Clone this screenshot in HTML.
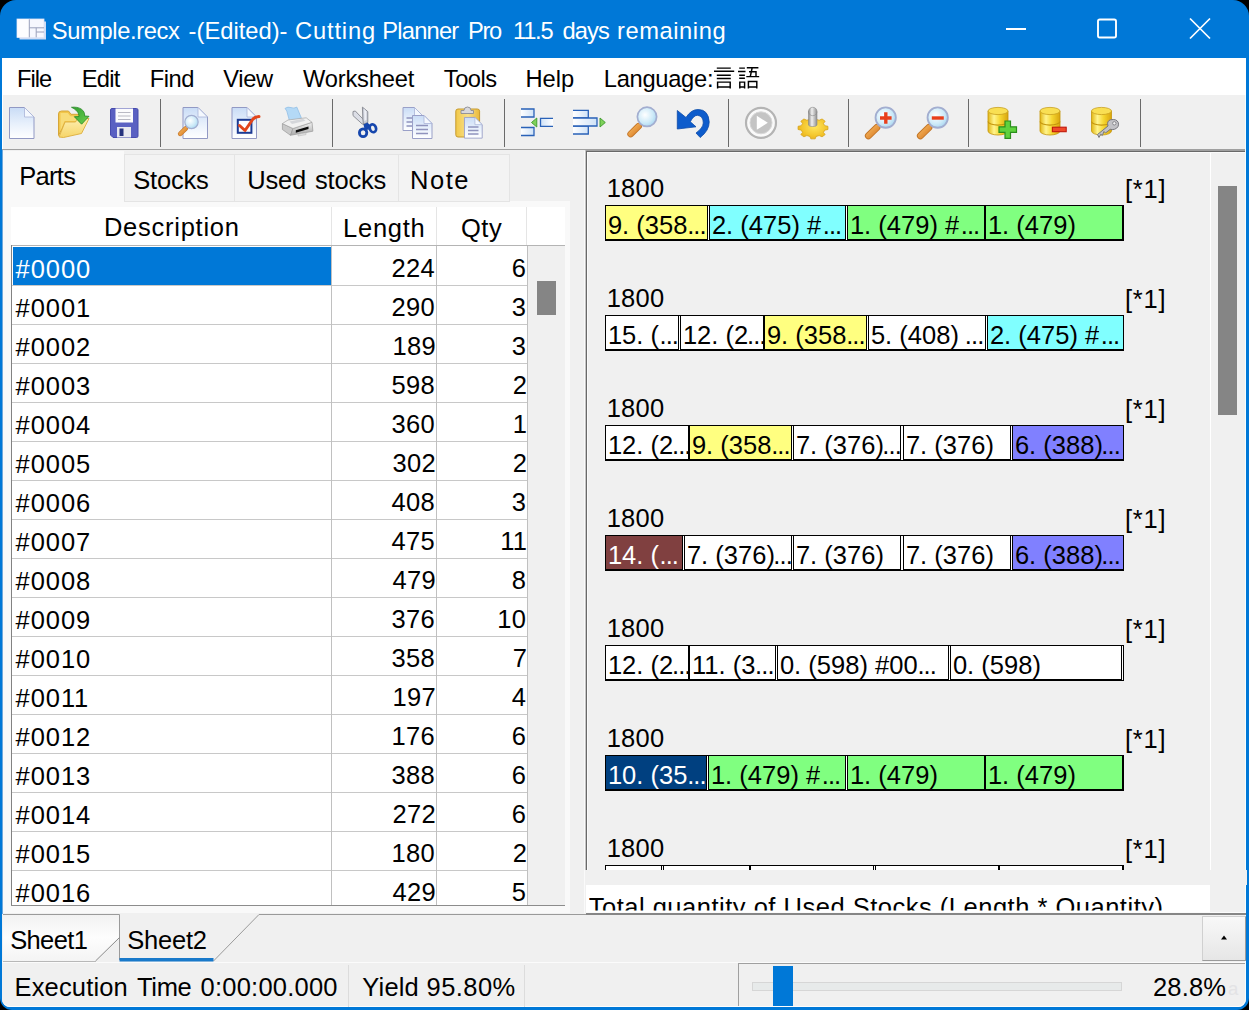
<!DOCTYPE html>
<html><head><meta charset="utf-8"><title>Cutting Planner Pro</title>
<style>
html,body{margin:0;padding:0;background:#000;}
body{width:1249px;height:1010px;overflow:hidden;position:relative;font-family:"Liberation Sans",sans-serif;}
#win{position:absolute;left:0;top:0;width:1249px;height:1010px;background:#0078d7;border-radius:16px 16px 12px 12px;overflow:hidden;}
.r{position:absolute;box-sizing:border-box;}
.t{position:absolute;white-space:pre;line-height:normal;font-family:"Liberation Sans",sans-serif;}
svg{position:absolute;overflow:visible;}

</style></head>
<body>
<div id="win">
<div class="r" style="left:2px;top:58px;width:1244px;height:949px;background:#f0f0f0;border-radius:0 0 8px 8px"></div>
<div class="r" style="left:2px;top:58px;width:1244px;height:37px;background:#fff"></div>
<div class="r" style="left:2px;top:95px;width:1244px;height:54px;background:#f0f0f0"></div>
<div class="r" style="left:2px;top:95px;width:1px;height:54px;background:#fff"></div>
<div class="r" style="left:2px;top:150px;width:1px;height:849px;background:#6fa9dc"></div>
<div class="r" style="left:3px;top:150px;width:1px;height:849px;background:#eaf3fb"></div>
<div class="r" style="left:2px;top:149px;width:1244px;height:1px;background:#a0a0a0"></div>
<div class="r" style="left:160px;top:99px;width:1px;height:48px;background:#6a6a6a"></div>
<div class="r" style="left:332px;top:99px;width:1px;height:48px;background:#6a6a6a"></div>
<div class="r" style="left:504px;top:99px;width:1px;height:48px;background:#6a6a6a"></div>
<div class="r" style="left:728px;top:99px;width:1px;height:48px;background:#6a6a6a"></div>
<div class="r" style="left:848px;top:99px;width:1px;height:48px;background:#6a6a6a"></div>
<div class="r" style="left:968px;top:99px;width:1px;height:48px;background:#6a6a6a"></div>
<div class="r" style="left:1140px;top:99px;width:1px;height:48px;background:#6a6a6a"></div>
<div class="r" style="left:3px;top:201px;width:567px;height:712px;background:#f9f9f9"></div>
<div class="r" style="left:3px;top:151px;width:121px;height:52px;background:#f9f9f9"></div>
<div class="r" style="left:124px;top:154px;width:111px;height:48px;background:#f3f3f3;border:1px solid #e4e4e4"></div>
<div class="r" style="left:234px;top:154px;width:165px;height:48px;background:#f3f3f3;border:1px solid #e4e4e4"></div>
<div class="r" style="left:398px;top:154px;width:112px;height:48px;background:#f3f3f3;border:1px solid #e4e4e4"></div>
<div class="r" style="left:11px;top:207px;width:554px;height:39px;background:#fff"></div>
<div class="r" style="left:331px;top:207px;width:1px;height:38px;background:#e5e5e5"></div>
<div class="r" style="left:436px;top:207px;width:1px;height:38px;background:#e5e5e5"></div>
<div class="r" style="left:526px;top:207px;width:1px;height:38px;background:#e5e5e5"></div>
<div class="r" style="left:11px;top:245px;width:554px;height:661px;background:#fff"></div>
<div class="r" style="left:11px;top:245px;width:554px;height:1px;background:#b4b4b4"></div>
<div class="r" style="left:11px;top:245px;width:1px;height:661px;background:#828282"></div>
<div class="r" style="left:528px;top:246px;width:37px;height:659px;background:#f0f0f0"></div>
<div class="r" style="left:537px;top:281px;width:19px;height:34px;background:#858585"></div>
<div class="r" style="left:12px;top:285px;width:516px;height:1px;background:#c8c8c8"></div>
<div class="r" style="left:12px;top:324px;width:516px;height:1px;background:#c8c8c8"></div>
<div class="r" style="left:12px;top:363px;width:516px;height:1px;background:#c8c8c8"></div>
<div class="r" style="left:12px;top:402px;width:516px;height:1px;background:#c8c8c8"></div>
<div class="r" style="left:12px;top:441px;width:516px;height:1px;background:#c8c8c8"></div>
<div class="r" style="left:12px;top:480px;width:516px;height:1px;background:#c8c8c8"></div>
<div class="r" style="left:12px;top:519px;width:516px;height:1px;background:#c8c8c8"></div>
<div class="r" style="left:12px;top:558px;width:516px;height:1px;background:#c8c8c8"></div>
<div class="r" style="left:12px;top:597px;width:516px;height:1px;background:#c8c8c8"></div>
<div class="r" style="left:12px;top:636px;width:516px;height:1px;background:#c8c8c8"></div>
<div class="r" style="left:12px;top:675px;width:516px;height:1px;background:#c8c8c8"></div>
<div class="r" style="left:12px;top:714px;width:516px;height:1px;background:#c8c8c8"></div>
<div class="r" style="left:12px;top:753px;width:516px;height:1px;background:#c8c8c8"></div>
<div class="r" style="left:12px;top:792px;width:516px;height:1px;background:#c8c8c8"></div>
<div class="r" style="left:12px;top:831px;width:516px;height:1px;background:#c8c8c8"></div>
<div class="r" style="left:12px;top:870px;width:516px;height:1px;background:#c8c8c8"></div>
<div class="r" style="left:331px;top:246px;width:1px;height:659px;background:#c0c0c0"></div>
<div class="r" style="left:436px;top:246px;width:1px;height:659px;background:#c0c0c0"></div>
<div class="r" style="left:527px;top:246px;width:1px;height:659px;background:#c0c0c0"></div>
<div class="r" style="left:13px;top:247px;width:318px;height:38px;background:#0078d7"></div>
<div class="r" style="left:11px;top:905px;width:554px;height:1px;background:#8c8c8c"></div>
<div class="r" style="left:584px;top:151px;width:1px;height:762px;background:#fafafa"></div>
<div class="r" style="left:585px;top:150px;width:661px;height:1px;background:#a0a0a0"></div>
<div class="r" style="left:585px;top:150px;width:1px;height:720px;background:#c4c4c4"></div>
<div class="r" style="left:586px;top:151px;width:660px;height:1px;background:#696969"></div>
<div class="r" style="left:586px;top:151px;width:1px;height:719px;background:#696969"></div>
<div class="r" style="left:587px;top:152px;width:658px;height:1px;background:#fafafa"></div>
<div class="r" style="left:587px;top:152px;width:1px;height:718px;background:#fafafa"></div>
<div class="r" style="left:1210px;top:153px;width:1px;height:717px;background:#fff"></div>
<div class="r" style="left:1218px;top:186px;width:19px;height:229px;background:#858585"></div>
<div class="r" style="left:1245px;top:95px;width:1px;height:900px;background:#f4feff"></div>
<div class="r" style="left:605px;top:205px;width:519px;height:36px;background:#fff;border:1px solid #000"></div>
<div class="r" style="left:605px;top:205px;width:103px;height:35px;background:#ffff80;border:1px solid #000"></div>
<div class="r" style="left:709px;top:205px;width:137px;height:35px;background:#80ffff;border:1px solid #000"></div>
<div class="r" style="left:847px;top:205px;width:138px;height:35px;background:#80ff80;border:1px solid #000"></div>
<div class="r" style="left:985px;top:205px;width:138px;height:35px;background:#80ff80;border:1px solid #000"></div>
<div class="r" style="left:605px;top:315px;width:519px;height:36px;background:#fff;border:1px solid #000"></div>
<div class="r" style="left:605px;top:315px;width:74px;height:35px;background:#fff;border:1px solid #000"></div>
<div class="r" style="left:680px;top:315px;width:84px;height:35px;background:#fff;border:1px solid #000"></div>
<div class="r" style="left:764px;top:315px;width:103px;height:35px;background:#ffff80;border:1px solid #000"></div>
<div class="r" style="left:868px;top:315px;width:118px;height:35px;background:#fff;border:1px solid #000"></div>
<div class="r" style="left:987px;top:315px;width:137px;height:35px;background:#80ffff;border:1px solid #000"></div>
<div class="r" style="left:605px;top:425px;width:519px;height:36px;background:#fff;border:1px solid #000"></div>
<div class="r" style="left:605px;top:425px;width:84px;height:35px;background:#fff;border:1px solid #000"></div>
<div class="r" style="left:689px;top:425px;width:103px;height:35px;background:#ffff80;border:1px solid #000"></div>
<div class="r" style="left:793px;top:425px;width:108px;height:35px;background:#fff;border:1px solid #000"></div>
<div class="r" style="left:903px;top:425px;width:108px;height:35px;background:#fff;border:1px solid #000"></div>
<div class="r" style="left:1012px;top:425px;width:112px;height:35px;background:#8080ff;border:1px solid #000"></div>
<div class="r" style="left:605px;top:535px;width:519px;height:36px;background:#fff;border:1px solid #000"></div>
<div class="r" style="left:605px;top:535px;width:78px;height:35px;background:#804040;border:1px solid #000"></div>
<div class="r" style="left:684px;top:535px;width:108px;height:35px;background:#fff;border:1px solid #000"></div>
<div class="r" style="left:793px;top:535px;width:108px;height:35px;background:#fff;border:1px solid #000"></div>
<div class="r" style="left:903px;top:535px;width:108px;height:35px;background:#fff;border:1px solid #000"></div>
<div class="r" style="left:1012px;top:535px;width:112px;height:35px;background:#8080ff;border:1px solid #000"></div>
<div class="r" style="left:605px;top:645px;width:519px;height:36px;background:#fff;border:1px solid #000"></div>
<div class="r" style="left:605px;top:645px;width:84px;height:35px;background:#fff;border:1px solid #000"></div>
<div class="r" style="left:689px;top:645px;width:87px;height:35px;background:#fff;border:1px solid #000"></div>
<div class="r" style="left:777px;top:645px;width:172px;height:35px;background:#fff;border:1px solid #000"></div>
<div class="r" style="left:950px;top:645px;width:172px;height:35px;background:#fff;border:1px solid #000"></div>
<div class="r" style="left:605px;top:755px;width:519px;height:36px;background:#fff;border:1px solid #000"></div>
<div class="r" style="left:605px;top:755px;width:102px;height:35px;background:#004080;border:1px solid #000"></div>
<div class="r" style="left:708px;top:755px;width:138px;height:35px;background:#80ff80;border:1px solid #000"></div>
<div class="r" style="left:847px;top:755px;width:138px;height:35px;background:#80ff80;border:1px solid #000"></div>
<div class="r" style="left:985px;top:755px;width:138px;height:35px;background:#80ff80;border:1px solid #000"></div>
<div class="r" style="left:605px;top:865px;width:519px;height:5px;background:#fff;border:1px solid #000;border-bottom:none"></div>
<div class="r" style="left:605px;top:865px;width:57px;height:5px;background:#fff;border:1px solid #000;border-bottom:none"></div>
<div class="r" style="left:663px;top:865px;width:87px;height:5px;background:#fff;border:1px solid #000;border-bottom:none"></div>
<div class="r" style="left:750px;top:865px;width:124px;height:5px;background:#fff;border:1px solid #000;border-bottom:none"></div>
<div class="r" style="left:875px;top:865px;width:124px;height:5px;background:#fff;border:1px solid #000;border-bottom:none"></div>
<div class="r" style="left:999px;top:865px;width:124px;height:5px;background:#fff;border:1px solid #000;border-bottom:none"></div>
<div class="r" style="left:586px;top:870px;width:661px;height:15px;background:#f0f0f0"></div>
<div class="r" style="left:586px;top:885px;width:624px;height:27px;background:#fff"></div>
<div class="r" style="left:586px;top:912px;width:660px;height:1px;background:#fbfbfb"></div>
<div class="r" style="left:2px;top:914px;width:1243px;height:48px;background:#f0f0f0"></div>
<div class="r" style="left:586px;top:913px;width:660px;height:2px;background:#868686"></div>
<svg style="left:0;top:0" width="1249" height="1010" viewBox="0 0 1249 1010">
<defs><linearGradient id="g1" x1="0" y1="0" x2="0" y2="1"><stop offset="0" stop-color="#f2f2f2"/><stop offset="0.5" stop-color="#fdfdfd"/><stop offset="1" stop-color="#f4f4f4"/></linearGradient></defs>
<polygon points="3,915 119,915 119,938 96,961 3,961" fill="url(#g1)"/>
<polyline points="3,914.5 119.5,914.5 119.5,960" fill="none" stroke="#9a9a9a" stroke-width="1"/>
<line x1="95.5" y1="961" x2="119.5" y2="937.5" stroke="#8a8a8a" stroke-width="1"/>
<line x1="3" y1="961.5" x2="96" y2="961.5" stroke="#b8b8b8" stroke-width="1"/>
<polyline points="213.5,961 259,914.5 586,914.5" fill="none" stroke="#9a9a9a" stroke-width="1"/>
<rect x="119.5" y="958" width="94" height="3.5" fill="#1979ca"/>
</svg>
<div class="r" style="left:1202px;top:916px;width:44px;height:45px;background:#f4f4f4;border:1px solid #d0d0d0;border-right-color:#9a9a9a;border-bottom-color:#9a9a9a;background:linear-gradient(#f8f8f8,#e6e6e6)"></div>
<svg style="left:1219px;top:934px" width="10" height="8" viewBox="0 0 10 8"><polygon points="5,1.5 8,5.5 2,5.5" fill="#000"/></svg>
<div class="r" style="left:2px;top:962px;width:1244px;height:45px;background:#f0f0f0;border-radius:0 0 8px 8px;border-bottom:1px solid #fdfdfd;border-right:1px solid #f4feff"></div>
<div class="r" style="left:2px;top:962px;width:1243px;height:1px;background:#fbfbfb"></div>
<div class="r" style="left:348px;top:965px;width:1px;height:42px;background:#dcdcdc"></div>
<div class="r" style="left:524px;top:965px;width:1px;height:42px;background:#dcdcdc"></div>
<div class="r" style="left:738px;top:963px;width:1px;height:43px;background:#a0a0a0"></div>
<div class="r" style="left:739px;top:963px;width:506px;height:1px;background:#a0a0a0"></div>
<div class="r" style="left:752px;top:982px;width:370px;height:9px;background:#e7eaea;border:1px solid #d6d6d6"></div>
<div class="r" style="left:773px;top:966px;width:20px;height:40px;background:#0078d7"></div>
<svg style="left:0;top:0" width="1249" height="58" viewBox="0 0 1249 58">
<line x1="1006" y1="29" x2="1026" y2="29" stroke="#fff" stroke-width="2"/>
<rect x="1098" y="19.5" width="18" height="18" fill="none" stroke="#fff" stroke-width="1.9" rx="1.8"/>
<path d="M1190 18.5 L1210 38.5 M1210 18.5 L1190 38.5" stroke="#fff" stroke-width="1.7" fill="none"/>
</svg>
<svg style="left:0;top:95px" width="1249" height="55" viewBox="0 95 1249 55">
<defs>
<linearGradient id="gdoc" x1="0" y1="0" x2="0" y2="1"><stop offset="0" stop-color="#c9dcf6"/><stop offset="0.55" stop-color="#e9f1fc"/><stop offset="1" stop-color="#ffffff"/></linearGradient>
<linearGradient id="gfold" x1="0" y1="0" x2="0" y2="1"><stop offset="0" stop-color="#f5cf58"/><stop offset="1" stop-color="#fbe9a2"/></linearGradient>
<linearGradient id="gfold2" x1="0" y1="0" x2="0" y2="1"><stop offset="0" stop-color="#fdeeb0"/><stop offset="1" stop-color="#f6d568"/></linearGradient>
<linearGradient id="ggreen" x1="0" y1="0" x2="1" y2="1"><stop offset="0" stop-color="#2f9e2f"/><stop offset="1" stop-color="#6fd14f"/></linearGradient>
<radialGradient id="glens" cx="0.4" cy="0.4" r="0.7"><stop offset="0" stop-color="#ffffff"/><stop offset="0.6" stop-color="#cdeaf8"/><stop offset="1" stop-color="#9fd0ee"/></radialGradient>
<linearGradient id="gorange" x1="0" y1="0" x2="1" y2="1"><stop offset="0" stop-color="#f6b45a"/><stop offset="1" stop-color="#d9802a"/></linearGradient>
<linearGradient id="gbar" x1="0" y1="0" x2="1" y2="0"><stop offset="0" stop-color="#ffffff"/><stop offset="1" stop-color="#cfe2f7"/></linearGradient>
<linearGradient id="gbarr" x1="1" y1="0" x2="0" y2="0"><stop offset="0" stop-color="#ffffff"/><stop offset="1" stop-color="#cfe2f7"/></linearGradient>
<linearGradient id="gcyl" x1="0" y1="0" x2="1" y2="0"><stop offset="0" stop-color="#e2b714"/><stop offset="0.3" stop-color="#fff48c"/><stop offset="0.6" stop-color="#f6d731"/><stop offset="1" stop-color="#d9a50c"/></linearGradient>
<linearGradient id="gprint" x1="0" y1="0" x2="0" y2="1"><stop offset="0" stop-color="#f2f2f2"/><stop offset="1" stop-color="#a8a8a8"/></linearGradient>
<linearGradient id="gstick" x1="0" y1="0" x2="1" y2="0"><stop offset="0" stop-color="#8a8a8a"/><stop offset="0.4" stop-color="#f0f0f0"/><stop offset="1" stop-color="#8e8e8e"/></linearGradient>
<radialGradient id="ggear" cx="0.55" cy="0.45" r="0.7"><stop offset="0" stop-color="#ffe55c"/><stop offset="0.6" stop-color="#f3c52c"/><stop offset="1" stop-color="#e2a514"/></radialGradient>
<linearGradient id="gclip" x1="0" y1="0" x2="1" y2="0"><stop offset="0" stop-color="#f1c848"/><stop offset="0.5" stop-color="#f9e08a"/><stop offset="1" stop-color="#e9b93a"/></linearGradient>
<filter id="soft" x="-5%" y="-5%" width="110%" height="110%"><feGaussianBlur stdDeviation="0.45"/></filter>
</defs>
<g filter="url(#soft)">
<!-- 1 new -->
<g transform="translate(9 107)"><path d="M0.5 0.5 H15.5 L25 10 V31.5 H0.5 Z" fill="url(#gdoc)" stroke="#9299c4" stroke-width="1"/><path d="M15.5 0.5 V10 H25 Z" fill="#f4f8fe" stroke="#a9b4d8" stroke-width="0.8"/></g>
<!-- 2 open -->
<path d="M58.5 135.5 V114 Q58.5 111 61.5 111 H68.5 L71 114.3 H83 V123 H65 Z" fill="#f2c64c" stroke="#d6a637" stroke-width="1"/>
<path d="M60.5 113 H67.8 L70.3 116.2 H80 V121 H64.5 L60.5 131 Z" fill="#f8dc78"/>
<path d="M59 137 L65 122 H75.5 L77.5 118.5 H89 L81.5 133.5 L63.5 137.5 Z" fill="url(#gfold2)" stroke="#dcae3c" stroke-width="0.9" stroke-linejoin="round"/>
<path d="M71.5 107.3 C79 106.3 85.3 110 84.6 116 L89 116.3 L81.6 124.2 L74.3 116.7 L79 116.5 C79 112.5 76 109.5 71.5 107.3 Z" fill="url(#ggreen)" stroke="#23861f" stroke-width="0.8" stroke-linejoin="round"/>
<!-- 3 save -->
<path d="M110.5 110 q0 -1.5 1.5 -1.5 H136.5 q1.5 0 1.5 1.5 V136 q0 1.5 -1.5 1.5 H113 L110.5 135 Z" fill="#5a60c2" stroke="#474cad" stroke-width="1"/>
<rect x="115.5" y="108.5" width="17.5" height="14" fill="#fbfbfd"/>
<path d="M118 112.5 H130.5 M118 116 H130.5 M118 119.5 H130.5" stroke="#b9b9c4" stroke-width="1.2"/>
<rect x="117" y="127" width="14" height="10.5" fill="#e9e9f0"/>
<rect x="119.5" y="128.5" width="4" height="7.5" fill="#27307e"/>
<!-- 4 preview -->
<g transform="translate(182.5 107)"><path d="M0.5 0.5 H15.5 L25 10 V31.5 H0.5 Z" fill="url(#gdoc)" stroke="#9299c4" stroke-width="1"/><path d="M15.5 0.5 V10 H25 Z" fill="#f4f8fe" stroke="#a9b4d8" stroke-width="0.8"/></g>
<g transform="translate(191.5 122) scale(0.74)"><g><line x1="-7.8" y1="8.8" x2="-15.3" y2="16.1" stroke="#c27426" stroke-width="6.2" stroke-linecap="round"/><line x1="-7.8" y1="8.8" x2="-15.3" y2="16.1" stroke="url(#gorange)" stroke-width="4.6" stroke-linecap="round"/><circle cx="0" cy="0" r="9" fill="url(#glens)" stroke="#a3aed0" stroke-width="1.6"/></g></g>
<!-- 5 check -->
<g transform="translate(231.5 107)"><path d="M0.5 0.5 H15.5 L25 10 V31.5 H0.5 Z" fill="url(#gdoc)" stroke="#9299c4" stroke-width="1"/><path d="M15.5 0.5 V10 H25 Z" fill="#f4f8fe" stroke="#a9b4d8" stroke-width="0.8"/></g>
<rect x="237.8" y="119.8" width="13.6" height="13" fill="#fdfdff" stroke="#1d3a93" stroke-width="2"/>
<path d="M239.5 125.5 L245 130.5 L253 119 Q256 116.5 259 116.5" fill="none" stroke="#e2441a" stroke-width="3" stroke-linejoin="round" stroke-linecap="round"/>
<!-- 6 printer -->
<path d="M285 108.4 Q288 106.3 291 107.6 T296.8 107.1 L301.3 117.8 L289.7 121.6 L286.8 111 Z" fill="#b4d9f6" stroke="#93bfe6" stroke-width="0.8" stroke-linejoin="round"/>
<path d="M282.4 123.6 L293 128.5 L290.5 135.3 L282.4 129.5 Z" fill="#c9c9c9" stroke="#9a9a9a" stroke-width="0.7" stroke-linejoin="round"/>
<path d="M293 128.5 L312 122.3 L312.9 131.2 L290.5 135.3 Z" fill="url(#gprint)" stroke="#9a9a9a" stroke-width="0.7" stroke-linejoin="round"/>
<path d="M282.4 123.6 L288 120 L306.2 117.8 L312 122.3 L293 128.5 Z" fill="#f1f1f1" stroke="#a4a4a4" stroke-width="0.7" stroke-linejoin="round"/>
<path d="M289.5 121.5 L303 118.8 L305.5 120.8 L292 124 Z" fill="#d4d6da"/>
<path d="M295.8 130.2 L308.5 126.4 V128.9 L295.8 132.7 Z" fill="#0c0c0c"/>
<path d="M298 134.3 L306 132.8 V134.6 L298 136 Z" fill="#e4e4e4" stroke="#b0b0b0" stroke-width="0.5"/>
<!-- 7 cut -->
<path d="M353 111.5 L355.3 111 L365.2 121.4 L364.8 125.2 L362 123.8 L353 115.6 Z" fill="#dcdee6" stroke="#84878f" stroke-width="0.9" stroke-linejoin="round"/>
<path d="M362.4 107.1 L367.8 111.6 V122.5 L363.4 124.2 L362.8 118.7 Z" fill="#c9ccd6" stroke="#84878f" stroke-width="0.9" stroke-linejoin="round"/>
<path d="M364.2 108.8 L366.4 111.5 V120 L364.4 121 Z" fill="#eef0f6"/>
<path d="M363.5 124.5 L367.5 122.5 L369.8 125 L368.5 130 L364.5 129 Z" fill="#1746ad"/>
<ellipse cx="363.1" cy="132.8" rx="3.7" ry="3.9" fill="none" stroke="#1746ad" stroke-width="2.8"/>
<ellipse cx="372.9" cy="128.3" rx="3.1" ry="4.0" fill="none" stroke="#1746ad" stroke-width="2.7" transform="rotate(-20 372.9 128.3)"/>
<!-- 8 copy -->
<g transform="translate(402.5 107)"><path d="M0.5 0.5 H12 L20 8.5 V23.5 H0.5 Z" fill="url(#gdoc)" stroke="#9aa0c8" stroke-width="1"/><path d="M12 0.5 V8.5 H20 Z" fill="#f4f8fe" stroke="#a9b4d8" stroke-width="0.8"/></g>
<path d="M406.5 118 H416 M406.5 122 H416 M406.5 126 H416" stroke="#8f93bd" stroke-width="1.7"/>
<g transform="translate(412 115)"><path d="M0.5 0.5 H12 L20 8.5 V23.5 H0.5 Z" fill="url(#gdoc)" stroke="#9aa0c8" stroke-width="1"/><path d="M12 0.5 V8.5 H20 Z" fill="#f4f8fe" stroke="#a9b4d8" stroke-width="0.8"/></g>
<path d="M416 125.5 H428 M416 129.5 H428 M416 133.5 H428" stroke="#8f93bd" stroke-width="1.7"/>
<!-- 9 paste -->
<rect x="455.8" y="109" width="23.8" height="28" rx="2.2" fill="url(#gclip)" stroke="#c79a2e" stroke-width="1"/>
<path d="M461 113.5 V110.5 h3 q0 -3.5 3.5 -3.5 q3.5 0 3.5 3.5 h2.5 V113.5 Z" fill="#d8d8dc" stroke="#8c8c94" stroke-width="0.9"/>
<g transform="translate(464 117) scale(0.91 0.9)"><g><path d="M0.5 0.5 H12 L20 8.5 V23.5 H0.5 Z" fill="url(#gdoc)" stroke="#9aa0c8" stroke-width="1"/><path d="M12 0.5 V8.5 H20 Z" fill="#f4f8fe" stroke="#a9b4d8" stroke-width="0.8"/></g></g>
<path d="M468 127 H478.5 M468 130.5 H478.5 M468 134 H478.5" stroke="#8f93bd" stroke-width="1.6"/>
<!-- 10 align a -->
<path d="M521 109 H534 V117 H521" fill="url(#gbar)" stroke="#2a62b8" stroke-width="1.3"/>
<path d="M521 127.5 H534 V135.5 H521" fill="url(#gbar)" stroke="#2a62b8" stroke-width="1.3"/>
<path d="M553 118.3 H540.5 V126.3 H553" fill="url(#gbarr)" stroke="#2a62b8" stroke-width="1.3"/>
<path d="M536.8 118 V127 L531.5 122.5 Z" fill="#7fd15a" stroke="#3c9a2c" stroke-width="0.9"/>
<!-- 11 align b -->
<path d="M573 110.3 H588.3 V118 H573" fill="url(#gbar)" stroke="#2a62b8" stroke-width="1.3"/>
<path d="M573 126 H588.3 V134 H573" fill="url(#gbar)" stroke="#2a62b8" stroke-width="1.3"/>
<path d="M573 118 H597 V126 H573" fill="url(#gbar)" stroke="#2a62b8" stroke-width="1.3"/>
<path d="M600 118 V127 L605.3 122.5 Z" fill="#7fd15a" stroke="#3c9a2c" stroke-width="0.9"/>
<!-- 12 find -->
<g transform="translate(647 116.8) scale(1.07)"><g><line x1="-7.8" y1="8.8" x2="-15.3" y2="16.1" stroke="#c27426" stroke-width="6.2" stroke-linecap="round"/><line x1="-7.8" y1="8.8" x2="-15.3" y2="16.1" stroke="url(#gorange)" stroke-width="4.6" stroke-linecap="round"/><circle cx="0" cy="0" r="9" fill="url(#glens)" stroke="#a3aed0" stroke-width="1.6"/></g></g>
<!-- 13 undo -->
<path d="M677.3 110.5 V129 L696 126.8 L690.3 121.8 Q693.5 115.3 697.5 115.3 Q703.3 116 703.3 123 Q703 128 696 133 L700.2 137.5 Q709.2 130.5 709.2 122 Q708.5 109.5 698 109.5 Q691 109.5 686 117.5 Z" fill="#0b5ccc" stroke="#094aa8" stroke-width="0.8" stroke-linejoin="round"/>
<!-- 14 play -->
<circle cx="761" cy="122.8" r="15" fill="#fafafa" stroke="#b4b4b4" stroke-width="2.2"/>
<circle cx="761" cy="122.8" r="11" fill="#c4c4c4" stroke="#d8d8d8" stroke-width="1"/>
<path d="M756.8 115.8 V129.8 L767.8 122.8 Z" fill="#ffffff"/>
<!-- 15 gear -->
<g transform="translate(813 126.85) scale(0.9 0.66)">
<path d="M-2.4 -15 h4.8 l1 3.6 l3.4 1.4 l3.3 -1.9 l3.4 3.4 l-1.9 3.3 l1.4 3.4 l3.6 1 v4.8 l-3.6 1 l-1.4 3.4 l1.9 3.3 l-3.4 3.4 l-3.3 -1.9 l-3.4 1.4 l-1 3.6 h-4.8 l-1 -3.6 l-3.4 -1.4 l-3.3 1.9 l-3.4 -3.4 l1.9 -3.3 l-1.4 -3.4 l-3.6 -1 v-4.8 l3.6 -1 l1.4 -3.4 l-1.9 -3.3 l3.4 -3.4 l3.3 1.9 l3.4 -1.4 Z" fill="url(#ggear)" stroke="#d6a21a" stroke-width="1"/>
</g>
<path d="M808.5 111.5 V124.5 A4.2 2 0 0 0 817 124.5 V111.5 Z" fill="url(#gstick)" stroke="#8a8a8a" stroke-width="0.6"/>
<ellipse cx="812.75" cy="111.5" rx="4.25" ry="4.2" fill="url(#gstick)" stroke="#8a8a8a" stroke-width="0.6"/>
<!-- 16 zoom in -->
<g transform="translate(885.7 117.6) scale(1.13)"><g><line x1="-7.8" y1="8.8" x2="-15.3" y2="16.1" stroke="#c27426" stroke-width="6.2" stroke-linecap="round"/><line x1="-7.8" y1="8.8" x2="-15.3" y2="16.1" stroke="url(#gorange)" stroke-width="4.6" stroke-linecap="round"/><circle cx="0" cy="0" r="9" fill="url(#glens)" stroke="#a3aed0" stroke-width="1.6"/></g></g>
<path d="M880 118 H891.6 M885.8 112.2 V123.8" stroke="#e8401f" stroke-width="3.4"/>
<!-- 17 zoom out -->
<g transform="translate(937.7 117.6) scale(1.13)"><g><line x1="-7.8" y1="8.8" x2="-15.3" y2="16.1" stroke="#c27426" stroke-width="6.2" stroke-linecap="round"/><line x1="-7.8" y1="8.8" x2="-15.3" y2="16.1" stroke="url(#gorange)" stroke-width="4.6" stroke-linecap="round"/><circle cx="0" cy="0" r="9" fill="url(#glens)" stroke="#a3aed0" stroke-width="1.6"/></g></g>
<path d="M931.8 118 H943.8" stroke="#e8401f" stroke-width="3.4"/>
<!-- 18 db add -->
<g transform="translate(988 107)"><path d="M0 4 V24 A10 4 0 0 0 20 24 V4 Z" fill="url(#gcyl)" stroke="#c4950e" stroke-width="0.8"/><path d="M0 14.5 A10 3.6 0 0 0 20 14.5" fill="none" stroke="#c4950e" stroke-width="1.1"/><ellipse cx="10" cy="4" rx="10" ry="3.6" fill="#f9df52" stroke="#c9a020" stroke-width="0.8"/></g>
<path d="M1005 121 h5.5 v5.8 h6 v5.5 h-6 v6 h-5.5 v-6 h-6 v-5.5 h6 Z" fill="#5fd23c" stroke="#2a8f1e" stroke-width="1.2"/>
<!-- 19 db remove -->
<g transform="translate(1040 107)"><path d="M0 4 V24 A10 4 0 0 0 20 24 V4 Z" fill="url(#gcyl)" stroke="#c4950e" stroke-width="0.8"/><path d="M0 14.5 A10 3.6 0 0 0 20 14.5" fill="none" stroke="#c4950e" stroke-width="1.1"/><ellipse cx="10" cy="4" rx="10" ry="3.6" fill="#f9df52" stroke="#c9a020" stroke-width="0.8"/></g>
<rect x="1052.4" y="127.2" width="13.8" height="4.5" fill="#f04a2c" stroke="#c0180e" stroke-width="1.1"/>
<!-- 20 db key -->
<g transform="translate(1091.5 107)"><path d="M0 4 V24 A10 4 0 0 0 20 24 V4 Z" fill="url(#gcyl)" stroke="#c4950e" stroke-width="0.8"/><path d="M0 14.5 A10 3.6 0 0 0 20 14.5" fill="none" stroke="#c4950e" stroke-width="1.1"/><ellipse cx="10" cy="4" rx="10" ry="3.6" fill="#f9df52" stroke="#c9a020" stroke-width="0.8"/></g>
<path d="M1099 137.5 L1097.5 134.5 L1108 126 Q1106.5 121 1110.5 119.8 Q1116.5 118.5 1118.3 122.5 Q1119.5 127.5 1114.5 129.3 Q1112 130 1110.2 129.3 L1105.5 133 L1104 131.5 L1102.3 135.5 L1100.8 134.2 Z" fill="#c2c2c6" stroke="#77777d" stroke-width="1"/>
<circle cx="1114.3" cy="123.3" r="1.7" fill="#f0f0f0" stroke="#77777d" stroke-width="0.8"/>
</g>
</svg>

<svg style="left:0;top:58px" width="1249" height="37" viewBox="0 58 1249 37">
<g fill="none" stroke="#000" stroke-width="1.45" transform="translate(0 -0.9)">
<path d="M716.8 69 H730.8 M714 72.2 H734.2 M716.8 76.2 H730.8 M716.8 79.4 H730.8 M717.6 89.3 V83 H730.2 V89.3 M717.6 87.8 H730.2"/>
<path d="M739.2 69 H744.9 M738 72.3 H745.5 M739.2 76.1 H744.9 M739.2 79.2 H744.9 M739.8 89.3 V83 H744.6 V89.3 M739.8 87.8 H744.6"/>
<path d="M746.8 68.6 H758.4 M752.2 68.6 L750.3 77.4 M749 72.7 H756 V77.4 M746.3 77.5 H759.2 M748.4 89.4 V82.3 H756.8 V89.4 M748.4 87.9 H756.8"/>
</g>
</svg>
<svg style="left:0;top:0" width="60" height="58" viewBox="0 0 60 58">
<path d="M19.5 21.5 H46 V39.5 H19.5 Z" fill="#cfdcf5"/>
<rect x="17" y="19" width="27" height="18.5" fill="#f6f7fe" stroke="#dfe4f4" stroke-width="0.8"/>
<rect x="17.4" y="19.4" width="11.6" height="17.7" fill="#fdfdff"/>
<path d="M29.3 19.3 V37.3 M29.3 27.8 H44 M36.2 27.8 V37.3 M36.2 32 H44" fill="none" stroke="#9aa0bb" stroke-width="1"/>
</svg>

<span class="t" style="left:15.60px;top:254.92px;font-size:25.5px;color:#fff;letter-spacing:0.918px">#0000</span>
<span class="t" style="left:391.50px;top:253.62px;font-size:25.5px;color:#000;letter-spacing:0.368px">224</span>
<span class="t" style="left:511.80px;top:253.62px;font-size:25.5px;color:#000;letter-spacing:0.368px">6</span>
<span class="t" style="left:15.60px;top:293.92px;font-size:25.5px;color:#000;letter-spacing:0.918px">#0001</span>
<span class="t" style="left:391.50px;top:292.62px;font-size:25.5px;color:#000;letter-spacing:0.368px">290</span>
<span class="t" style="left:511.80px;top:292.62px;font-size:25.5px;color:#000;letter-spacing:0.368px">3</span>
<span class="t" style="left:15.60px;top:332.92px;font-size:25.5px;color:#000;letter-spacing:0.918px">#0002</span>
<span class="t" style="left:392.50px;top:331.62px;font-size:25.5px;color:#000;letter-spacing:0.368px">189</span>
<span class="t" style="left:511.80px;top:331.62px;font-size:25.5px;color:#000;letter-spacing:0.368px">3</span>
<span class="t" style="left:15.60px;top:371.92px;font-size:25.5px;color:#000;letter-spacing:0.918px">#0003</span>
<span class="t" style="left:391.50px;top:370.62px;font-size:25.5px;color:#000;letter-spacing:0.368px">598</span>
<span class="t" style="left:512.80px;top:370.62px;font-size:25.5px;color:#000;letter-spacing:0.368px">2</span>
<span class="t" style="left:15.60px;top:410.92px;font-size:25.5px;color:#000;letter-spacing:0.918px">#0004</span>
<span class="t" style="left:391.50px;top:409.62px;font-size:25.5px;color:#000;letter-spacing:0.368px">360</span>
<span class="t" style="left:512.80px;top:409.62px;font-size:25.5px;color:#000;letter-spacing:0.368px">1</span>
<span class="t" style="left:15.60px;top:449.92px;font-size:25.5px;color:#000;letter-spacing:0.918px">#0005</span>
<span class="t" style="left:392.50px;top:448.62px;font-size:25.5px;color:#000;letter-spacing:0.368px">302</span>
<span class="t" style="left:512.80px;top:448.62px;font-size:25.5px;color:#000;letter-spacing:0.368px">2</span>
<span class="t" style="left:15.60px;top:488.92px;font-size:25.5px;color:#000;letter-spacing:0.918px">#0006</span>
<span class="t" style="left:391.50px;top:487.62px;font-size:25.5px;color:#000;letter-spacing:0.368px">408</span>
<span class="t" style="left:511.80px;top:487.62px;font-size:25.5px;color:#000;letter-spacing:0.368px">3</span>
<span class="t" style="left:15.60px;top:527.92px;font-size:25.5px;color:#000;letter-spacing:0.918px">#0007</span>
<span class="t" style="left:391.50px;top:526.62px;font-size:25.5px;color:#000;letter-spacing:0.368px">475</span>
<span class="t" style="left:500.14px;top:526.62px;font-size:25.5px;color:#000;letter-spacing:0.368px">11</span>
<span class="t" style="left:15.60px;top:566.92px;font-size:25.5px;color:#000;letter-spacing:0.918px">#0008</span>
<span class="t" style="left:392.50px;top:565.62px;font-size:25.5px;color:#000;letter-spacing:0.368px">479</span>
<span class="t" style="left:511.80px;top:565.62px;font-size:25.5px;color:#000;letter-spacing:0.368px">8</span>
<span class="t" style="left:15.60px;top:605.92px;font-size:25.5px;color:#000;letter-spacing:0.918px">#0009</span>
<span class="t" style="left:391.50px;top:604.62px;font-size:25.5px;color:#000;letter-spacing:0.368px">376</span>
<span class="t" style="left:497.25px;top:604.62px;font-size:25.5px;color:#000;letter-spacing:0.368px">10</span>
<span class="t" style="left:15.60px;top:644.92px;font-size:25.5px;color:#000;letter-spacing:0.918px">#0010</span>
<span class="t" style="left:391.50px;top:643.62px;font-size:25.5px;color:#000;letter-spacing:0.368px">358</span>
<span class="t" style="left:512.80px;top:643.62px;font-size:25.5px;color:#000;letter-spacing:0.368px">7</span>
<span class="t" style="left:15.60px;top:683.92px;font-size:25.5px;color:#000;letter-spacing:0.918px">#0011</span>
<span class="t" style="left:392.50px;top:682.62px;font-size:25.5px;color:#000;letter-spacing:0.368px">197</span>
<span class="t" style="left:511.80px;top:682.62px;font-size:25.5px;color:#000;letter-spacing:0.368px">4</span>
<span class="t" style="left:15.60px;top:722.92px;font-size:25.5px;color:#000;letter-spacing:0.918px">#0012</span>
<span class="t" style="left:391.50px;top:721.62px;font-size:25.5px;color:#000;letter-spacing:0.368px">176</span>
<span class="t" style="left:511.80px;top:721.62px;font-size:25.5px;color:#000;letter-spacing:0.368px">6</span>
<span class="t" style="left:15.60px;top:761.92px;font-size:25.5px;color:#000;letter-spacing:0.918px">#0013</span>
<span class="t" style="left:391.50px;top:760.62px;font-size:25.5px;color:#000;letter-spacing:0.368px">388</span>
<span class="t" style="left:511.80px;top:760.62px;font-size:25.5px;color:#000;letter-spacing:0.368px">6</span>
<span class="t" style="left:15.60px;top:800.92px;font-size:25.5px;color:#000;letter-spacing:0.918px">#0014</span>
<span class="t" style="left:392.50px;top:799.62px;font-size:25.5px;color:#000;letter-spacing:0.368px">272</span>
<span class="t" style="left:511.80px;top:799.62px;font-size:25.5px;color:#000;letter-spacing:0.368px">6</span>
<span class="t" style="left:15.60px;top:839.92px;font-size:25.5px;color:#000;letter-spacing:0.918px">#0015</span>
<span class="t" style="left:391.50px;top:838.62px;font-size:25.5px;color:#000;letter-spacing:0.368px">180</span>
<span class="t" style="left:512.80px;top:838.62px;font-size:25.5px;color:#000;letter-spacing:0.368px">2</span>
<span class="t" style="left:15.60px;top:878.92px;font-size:25.5px;color:#000;letter-spacing:0.918px">#0016</span>
<span class="t" style="left:392.50px;top:877.62px;font-size:25.5px;color:#000;letter-spacing:0.368px">429</span>
<span class="t" style="left:511.80px;top:877.62px;font-size:25.5px;color:#000;letter-spacing:0.368px">5</span>
<span class="t" style="left:103.90px;top:213.32px;font-size:25.5px;color:#000;letter-spacing:0.753px">Description</span>
<span class="t" style="left:343.00px;top:213.52px;font-size:25.5px;color:#000;letter-spacing:0.758px">Length</span>
<span class="t" style="left:460.90px;top:213.52px;font-size:25.5px;color:#000;letter-spacing:0.640px">Qty</span>
<span class="t" style="left:19.20px;top:162.42px;font-size:25.5px;color:#000;letter-spacing:-0.667px">Parts</span>
<span class="t" style="left:133.30px;top:166.42px;font-size:25.5px;color:#000;letter-spacing:-0.215px">Stocks</span>
<span class="t" style="left:247.30px;top:166.42px;font-size:25.5px;color:#000;letter-spacing:-0.249px">Used</span>
<span class="t" style="left:315.00px;top:166.42px;font-size:25.5px;color:#000;letter-spacing:-0.203px">stocks</span>
<span class="t" style="left:409.90px;top:166.42px;font-size:25.5px;color:#000;letter-spacing:1.573px">Note</span>
<span class="t" style="left:607.90px;top:210.82px;font-size:25.5px;color:#000;letter-spacing:0.026px;clip-path:inset(0 0.00px 0 0.00px)">9. (358</span>
<span class="t" style="left:687.16px;top:210.82px;font-size:25.5px;color:#000;letter-spacing:-0.885px;clip-path:inset(0 0.00px 0 0.00px)">...</span>
<span class="t" style="left:711.90px;top:210.82px;font-size:25.5px;color:#000;letter-spacing:0.026px;clip-path:inset(0 0.00px 0 0.00px)">2. (475) #</span>
<span class="t" style="left:822.70px;top:210.82px;font-size:25.5px;color:#000;letter-spacing:-0.885px;clip-path:inset(0 0.00px 0 0.00px)">...</span>
<span class="t" style="left:849.90px;top:210.82px;font-size:25.5px;color:#000;letter-spacing:0.026px;clip-path:inset(0 0.00px 0 0.00px)">1. (479) #</span>
<span class="t" style="left:960.70px;top:210.82px;font-size:25.5px;color:#000;letter-spacing:-0.885px;clip-path:inset(0 0.00px 0 0.00px)">...</span>
<span class="t" style="left:987.90px;top:210.82px;font-size:25.5px;color:#000;letter-spacing:0.026px;clip-path:inset(0 0.00px 0 0.00px)">1. (479)</span>
<span class="t" style="left:606.70px;top:174.42px;font-size:25.5px;color:#000;letter-spacing:0.251px">1800</span>
<span class="t" style="left:1125.00px;top:174.72px;font-size:25.5px;color:#000;letter-spacing:0.737px">[*1]</span>
<span class="t" style="left:607.90px;top:320.82px;font-size:25.5px;color:#000;letter-spacing:0.026px;clip-path:inset(0 0.00px 0 0.00px)">15. (</span>
<span class="t" style="left:659.44px;top:320.82px;font-size:25.5px;color:#000;letter-spacing:-0.885px;clip-path:inset(0 0.04px 0 0.00px)">...</span>
<span class="t" style="left:682.90px;top:320.82px;font-size:25.5px;color:#000;letter-spacing:0.026px;clip-path:inset(0 0.00px 0 0.00px)">12. (2</span>
<span class="t" style="left:746.96px;top:320.82px;font-size:25.5px;color:#000;letter-spacing:-0.885px;clip-path:inset(0 2.56px 0 0.00px)">...</span>
<span class="t" style="left:766.90px;top:320.82px;font-size:25.5px;color:#000;letter-spacing:0.026px;clip-path:inset(0 0.00px 0 0.00px)">9. (358</span>
<span class="t" style="left:846.16px;top:320.82px;font-size:25.5px;color:#000;letter-spacing:-0.885px;clip-path:inset(0 0.00px 0 0.00px)">...</span>
<span class="t" style="left:870.90px;top:320.82px;font-size:25.5px;color:#000;letter-spacing:0.026px;clip-path:inset(0 0.00px 0 0.00px)">5. (408)</span>
<span class="t" style="left:964.87px;top:320.82px;font-size:25.5px;color:#000;letter-spacing:-0.885px;clip-path:inset(0 0.00px 0 0.00px)">...</span>
<span class="t" style="left:989.90px;top:320.82px;font-size:25.5px;color:#000;letter-spacing:0.026px;clip-path:inset(0 0.00px 0 0.00px)">2. (475) #</span>
<span class="t" style="left:1100.70px;top:320.82px;font-size:25.5px;color:#000;letter-spacing:-0.885px;clip-path:inset(0 0.00px 0 0.00px)">...</span>
<span class="t" style="left:606.70px;top:284.42px;font-size:25.5px;color:#000;letter-spacing:0.251px">1800</span>
<span class="t" style="left:1125.00px;top:284.72px;font-size:25.5px;color:#000;letter-spacing:0.737px">[*1]</span>
<span class="t" style="left:607.90px;top:430.82px;font-size:25.5px;color:#000;letter-spacing:0.026px;clip-path:inset(0 0.00px 0 0.00px)">12. (2</span>
<span class="t" style="left:671.96px;top:430.82px;font-size:25.5px;color:#000;letter-spacing:-0.885px;clip-path:inset(0 2.56px 0 0.00px)">...</span>
<span class="t" style="left:691.90px;top:430.82px;font-size:25.5px;color:#000;letter-spacing:0.026px;clip-path:inset(0 0.00px 0 0.00px)">9. (358</span>
<span class="t" style="left:771.16px;top:430.82px;font-size:25.5px;color:#000;letter-spacing:-0.885px;clip-path:inset(0 0.00px 0 0.00px)">...</span>
<span class="t" style="left:795.90px;top:430.82px;font-size:25.5px;color:#000;letter-spacing:0.026px;clip-path:inset(0 0.00px 0 0.00px)">7. (376)</span>
<span class="t" style="left:882.37px;top:430.82px;font-size:25.5px;color:#000;letter-spacing:-0.885px;clip-path:inset(0 0.97px 0 0.00px)">...</span>
<span class="t" style="left:905.90px;top:430.82px;font-size:25.5px;color:#000;letter-spacing:0.026px;clip-path:inset(0 0.00px 0 0.00px)">7. (376)</span>
<span class="t" style="left:1014.90px;top:430.82px;font-size:25.5px;color:#000;letter-spacing:0.026px;clip-path:inset(0 0.00px 0 0.00px)">6. (388)</span>
<span class="t" style="left:1101.37px;top:430.82px;font-size:25.5px;color:#000;letter-spacing:-0.885px;clip-path:inset(0 0.00px 0 0.00px)">...</span>
<span class="t" style="left:606.70px;top:394.42px;font-size:25.5px;color:#000;letter-spacing:0.251px">1800</span>
<span class="t" style="left:1125.00px;top:394.72px;font-size:25.5px;color:#000;letter-spacing:0.737px">[*1]</span>
<span class="t" style="left:607.90px;top:540.82px;font-size:25.5px;color:#fff;letter-spacing:0.026px;clip-path:inset(0 0.00px 0 0.00px)">14. (</span>
<span class="t" style="left:659.44px;top:540.82px;font-size:25.5px;color:#fff;letter-spacing:-0.885px;clip-path:inset(0 0.00px 0 0.00px)">...</span>
<span class="t" style="left:686.90px;top:540.82px;font-size:25.5px;color:#000;letter-spacing:0.026px;clip-path:inset(0 0.00px 0 0.00px)">7. (376)</span>
<span class="t" style="left:773.37px;top:540.82px;font-size:25.5px;color:#000;letter-spacing:-0.885px;clip-path:inset(0 0.97px 0 0.00px)">...</span>
<span class="t" style="left:795.90px;top:540.82px;font-size:25.5px;color:#000;letter-spacing:0.026px;clip-path:inset(0 0.00px 0 0.00px)">7. (376)</span>
<span class="t" style="left:905.90px;top:540.82px;font-size:25.5px;color:#000;letter-spacing:0.026px;clip-path:inset(0 0.00px 0 0.00px)">7. (376)</span>
<span class="t" style="left:1014.90px;top:540.82px;font-size:25.5px;color:#000;letter-spacing:0.026px;clip-path:inset(0 0.00px 0 0.00px)">6. (388)</span>
<span class="t" style="left:1101.37px;top:540.82px;font-size:25.5px;color:#000;letter-spacing:-0.885px;clip-path:inset(0 0.00px 0 0.00px)">...</span>
<span class="t" style="left:606.70px;top:504.42px;font-size:25.5px;color:#000;letter-spacing:0.251px">1800</span>
<span class="t" style="left:1125.00px;top:504.72px;font-size:25.5px;color:#000;letter-spacing:0.737px">[*1]</span>
<span class="t" style="left:607.90px;top:650.82px;font-size:25.5px;color:#000;letter-spacing:0.026px;clip-path:inset(0 0.00px 0 0.00px)">12. (2</span>
<span class="t" style="left:671.96px;top:650.82px;font-size:25.5px;color:#000;letter-spacing:-0.885px;clip-path:inset(0 2.56px 0 0.00px)">...</span>
<span class="t" style="left:691.90px;top:650.82px;font-size:25.5px;color:#000;letter-spacing:0.026px;clip-path:inset(0 0.00px 0 0.00px)">11. (3</span>
<span class="t" style="left:755.06px;top:650.82px;font-size:25.5px;color:#000;letter-spacing:-0.885px;clip-path:inset(0 0.00px 0 0.00px)">...</span>
<span class="t" style="left:779.90px;top:650.82px;font-size:25.5px;color:#000;letter-spacing:0.026px;clip-path:inset(0 0.00px 0 0.00px)">0. (598) #00</span>
<span class="t" style="left:917.42px;top:650.82px;font-size:25.5px;color:#000;letter-spacing:-0.885px;clip-path:inset(0 0.00px 0 0.00px)">...</span>
<span class="t" style="left:952.90px;top:650.82px;font-size:25.5px;color:#000;letter-spacing:0.026px;clip-path:inset(0 0.00px 0 0.00px)">0. (598)</span>
<span class="t" style="left:606.70px;top:614.42px;font-size:25.5px;color:#000;letter-spacing:0.251px">1800</span>
<span class="t" style="left:1125.00px;top:614.72px;font-size:25.5px;color:#000;letter-spacing:0.737px">[*1]</span>
<span class="t" style="left:607.90px;top:760.82px;font-size:25.5px;color:#fff;letter-spacing:0.026px;clip-path:inset(0 0.00px 0 0.00px)">10. (35</span>
<span class="t" style="left:687.16px;top:760.82px;font-size:25.5px;color:#fff;letter-spacing:-0.885px;clip-path:inset(0 0.00px 0 0.00px)">...</span>
<span class="t" style="left:710.90px;top:760.82px;font-size:25.5px;color:#000;letter-spacing:0.026px;clip-path:inset(0 0.00px 0 0.00px)">1. (479) #</span>
<span class="t" style="left:821.70px;top:760.82px;font-size:25.5px;color:#000;letter-spacing:-0.885px;clip-path:inset(0 0.00px 0 0.00px)">...</span>
<span class="t" style="left:849.90px;top:760.82px;font-size:25.5px;color:#000;letter-spacing:0.026px;clip-path:inset(0 0.00px 0 0.00px)">1. (479)</span>
<span class="t" style="left:987.90px;top:760.82px;font-size:25.5px;color:#000;letter-spacing:0.026px;clip-path:inset(0 0.00px 0 0.00px)">1. (479)</span>
<span class="t" style="left:606.70px;top:724.42px;font-size:25.5px;color:#000;letter-spacing:0.251px">1800</span>
<span class="t" style="left:1125.00px;top:724.72px;font-size:25.5px;color:#000;letter-spacing:0.737px">[*1]</span>
<span class="t" style="left:606.70px;top:834.42px;font-size:25.5px;color:#000;letter-spacing:0.251px">1800</span>
<span class="t" style="left:1125.00px;top:834.72px;font-size:25.5px;color:#000;letter-spacing:0.737px">[*1]</span>
<span class="t" style="left:588.70px;top:892.92px;font-size:25.5px;color:#000;letter-spacing:0.507px;clip-path:inset(0 0 11.3px 0)">Total quantity of Used Stocks (Length * Quantity)</span>
<span class="t" style="left:10.20px;top:925.62px;font-size:25.5px;color:#000;letter-spacing:-0.628px">Sheet1</span>
<span class="t" style="left:127.20px;top:925.62px;font-size:25.5px;color:#000;letter-spacing:-0.208px">Sheet2</span>
<span class="t" style="left:14.50px;top:973.32px;font-size:25.5px;color:#000;letter-spacing:0.162px">Execution</span>
<span class="t" style="left:137.00px;top:973.32px;font-size:25.5px;color:#000;letter-spacing:-0.312px">Time</span>
<span class="t" style="left:200.60px;top:973.32px;font-size:25.5px;color:#000;letter-spacing:0.217px">0:00:00.000</span>
<span class="t" style="left:362.30px;top:973.32px;font-size:25.5px;color:#000;letter-spacing:0.181px">Yield</span>
<span class="t" style="left:426.60px;top:973.32px;font-size:25.5px;color:#000;letter-spacing:0.418px">95.80%</span>
<span class="t" style="left:1153.00px;top:972.52px;font-size:25.5px;color:#000;letter-spacing:0.167px">28.8%</span>
<span class="t" style="left:1228.00px;top:977.86px;font-size:18.5px;color:#e3e3e5;letter-spacing:0.000px">a</span>
<span class="t" style="left:16.90px;top:65.55px;font-size:23.7px;color:#000;letter-spacing:-0.965px">File</span>
<span class="t" style="left:81.70px;top:65.55px;font-size:23.7px;color:#000;letter-spacing:-0.745px">Edit</span>
<span class="t" style="left:149.70px;top:65.55px;font-size:23.7px;color:#000;letter-spacing:-0.435px">Find</span>
<span class="t" style="left:223.30px;top:65.55px;font-size:23.7px;color:#000;letter-spacing:-0.369px">View</span>
<span class="t" style="left:302.90px;top:65.55px;font-size:23.7px;color:#000;letter-spacing:-0.163px">Worksheet</span>
<span class="t" style="left:443.80px;top:65.55px;font-size:23.7px;color:#000;letter-spacing:-0.513px">Tools</span>
<span class="t" style="left:525.40px;top:65.55px;font-size:23.7px;color:#000;letter-spacing:0.019px">Help</span>
<span class="t" style="left:603.80px;top:65.55px;font-size:23.7px;color:#000;letter-spacing:-0.286px">Language:</span>
<span class="t" style="left:51.80px;top:17.85px;font-size:23.7px;color:#fff;letter-spacing:-0.360px">Sumple.recx</span>
<span class="t" style="left:188.60px;top:17.85px;font-size:23.7px;color:#fff;letter-spacing:0.019px">-(Edited)-</span>
<span class="t" style="left:295.00px;top:17.85px;font-size:23.7px;color:#fff;letter-spacing:0.854px">Cutting</span>
<span class="t" style="left:382.30px;top:17.85px;font-size:23.7px;color:#fff;letter-spacing:-0.793px">Planner</span>
<span class="t" style="left:468.00px;top:17.85px;font-size:23.7px;color:#fff;letter-spacing:-1.344px">Pro</span>
<span class="t" style="left:513.00px;top:17.85px;font-size:23.7px;color:#fff;letter-spacing:-1.257px">11.5</span>
<span class="t" style="left:562.40px;top:17.85px;font-size:23.7px;color:#fff;letter-spacing:-0.864px">days</span>
<span class="t" style="left:617.00px;top:17.85px;font-size:23.7px;color:#fff;letter-spacing:0.570px">remaining</span>
</div>
</body></html>
